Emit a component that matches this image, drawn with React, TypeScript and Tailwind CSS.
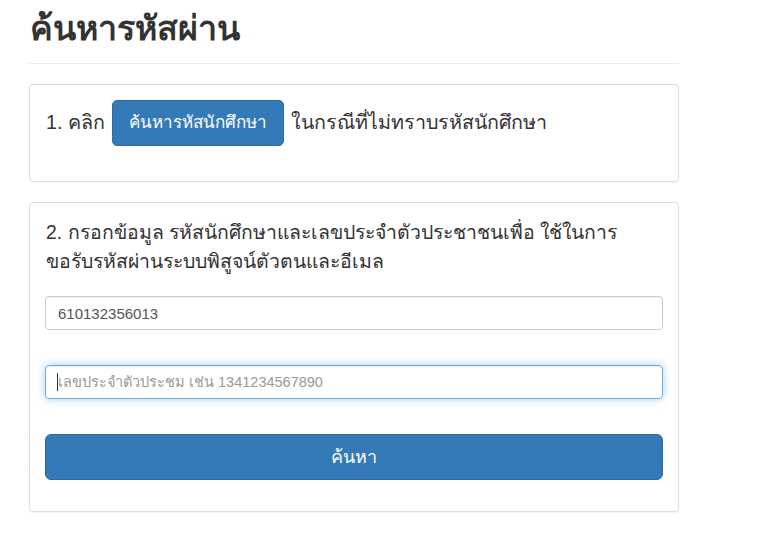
export default function App() {
  return (
    <div className="min-h-[557px] bg-white pl-[29px] text-[#333]" style={{ fontFamily: '"Liberation Sans", "Noto Sans", sans-serif' }}>
      <div className="w-[650px]">
        <div className="border-b border-[#eee] pb-[13px] pl-px pt-[6px]">
          <h1 className="text-[34px] font-bold leading-[44px]">ค้นหารหัสผ่าน</h1>
        </div>
        <div className="mt-[20px] h-[98px] rounded-[4px] border border-[#ddd] pl-[16px] pr-[15px] pt-[15px] shadow-[0_1px_1px_rgba(0,0,0,0.05)]">
          <div className="flex items-center text-[19.7px]">
            <span>1. คลิก</span>
            <button className="ml-[7px] mr-[7px] h-[46px] rounded-[5px] border border-[#2e6da4] bg-[#337ab7] px-[16px] text-[17px] font-medium text-white">ค้นหารหัสนักศึกษา</button>
            <span>ในกรณีที่ไม่ทราบรหัสนักศึกษา</span>
          </div>
        </div>
        <div className="mt-[20px] h-[310px] rounded-[4px] border border-[#ddd] px-[15px] pt-[15px] shadow-[0_1px_1px_rgba(0,0,0,0.05)]">
          <p className="pl-px text-[19.4px] leading-[29px]">2. กรอกข้อมูล รหัสนักศึกษาและเลขประจำตัวประชาชนเพื่อ ใช้ในการ<br />ขอรับรหัสผ่านระบบพิสูจน์ตัวตนและอีเมล</p>
          <input className="mt-[20px] block h-[34px] w-full rounded-[4px] border border-[#ccc] px-[12px] text-[15px] text-[#555] outline-none shadow-[inset_0_1px_1px_rgba(0,0,0,0.075)]" defaultValue="610132356013" />
          <div className="relative mt-[35px]">
            <input className="block h-[34px] w-full rounded-[4px] border border-[#66afe9] px-[12px] text-[14.5px] text-[#555] outline-none placeholder:text-[#999] shadow-[inset_0_1px_1px_rgba(0,0,0,0.075),0_0_8px_rgba(102,175,233,0.6)]" placeholder="เลขประจำตัวประชม เช่น 1341234567890" />
            <span className="absolute left-[12px] top-[8px] h-[18px] w-px bg-[#333]" />
          </div>
          <button className="mt-[35px] block h-[46px] w-full rounded-[6px] border border-[#2e6da4] bg-[#337ab7] text-[18px] font-medium text-white">ค้นหา</button>
        </div>
      </div>
    </div>
  );
}
